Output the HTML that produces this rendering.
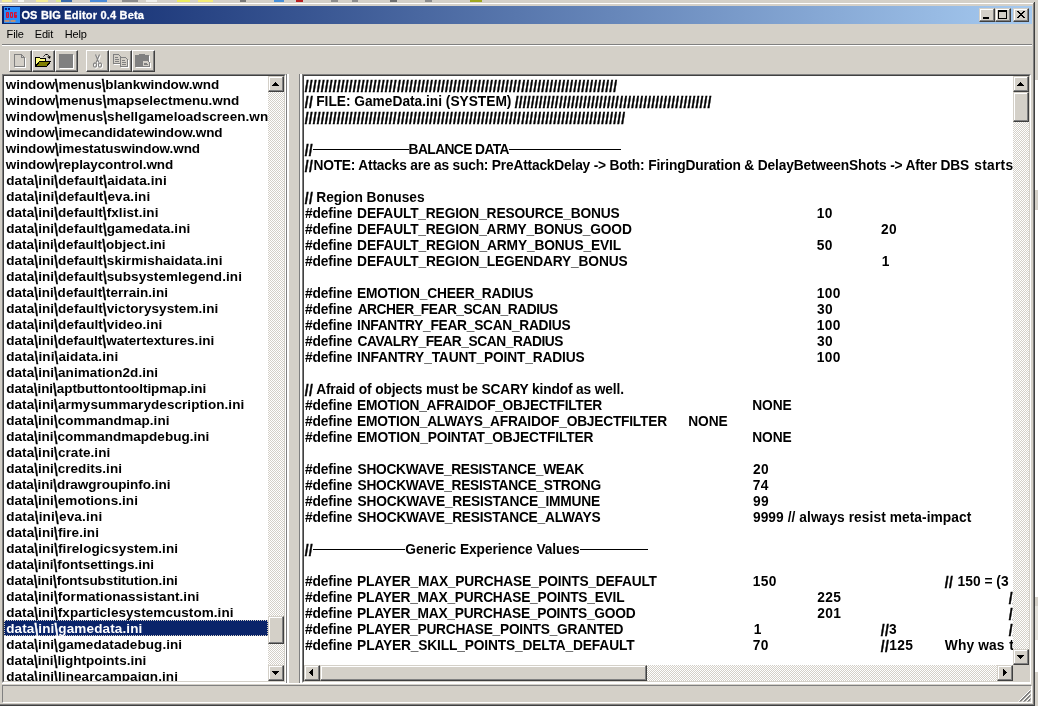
<!DOCTYPE html>
<html><head><meta charset="utf-8"><title>OS BIG Editor 0.4 Beta</title>
<style>
html,body{margin:0;padding:0;}
body{width:1038px;height:706px;overflow:hidden;background:#d4d0c8;position:relative;font-family:"Liberation Sans",sans-serif;}
.a{position:absolute;}
.a,.a *{box-sizing:border-box;}
#title{left:2px;top:6px;width:1030px;height:18px;background:linear-gradient(90deg,#0a246a 0%,#a6caf0 100%);}
#ttext{left:22px;top:6px;height:18px;line-height:18px;color:#fff;font-weight:bold;font-size:11px;white-space:nowrap;-webkit-text-stroke:0.3px #fff;}
.menu{top:27px;height:14px;line-height:14px;font-size:11px;color:#000;white-space:nowrap;}
.btn{background:#d4d0c8;border:1px solid;border-color:#fff #404040 #404040 #fff;box-shadow:inset -1px -1px 0 #808080;}
.sb{background:#d4d0c8;border:1px solid;border-color:#d4d0c8 #404040 #404040 #d4d0c8;box-shadow:inset -1px -1px 0 #808080,inset 1px 1px 0 #fff;}
.tb{top:50px;width:23px;height:22px;}
.cap{top:8px;width:16px;height:14px;}
.sunk{border:1px solid;border-color:#808080 #fff #fff #808080;}
.sunk2{border:1px solid;border-color:#404040 #d4d0c8 #d4d0c8 #404040;}
.track{background:conic-gradient(#fff 25%,#d4d0c8 0 50%,#fff 0 75%,#d4d0c8 0) 0 0/2px 2px;}
.sys{font-family:"Liberation Sans",sans-serif;font-weight:bold;font-size:13.5px;line-height:16px;color:#000;white-space:pre;}
#list{left:4px;top:76px;width:264px;height:605px;overflow:hidden;will-change:transform;}
#list div{position:absolute;left:0;width:264px;height:16px;}
#list div span{position:absolute;top:1px;height:16px;}
#list b{display:inline-block;transform:translateY(-1px) scaleY(1.4);transform-origin:0 3px;-webkit-text-stroke:0.3px currentColor;}
#list div.sel{background:#0a246a;color:#fff;outline:1px dotted #d4d0c8;outline-offset:-1px;}
#memo{left:304px;top:76px;width:709px;height:589px;overflow:hidden;will-change:transform;font-size:13.75px;}
#memo span{position:absolute;height:16px;}
#memo span.sl{transform:scaleY(1.2);transform-origin:0 2px;-webkit-text-stroke:0.35px #000;}
#memo i{position:absolute;height:1px;background:#000;}
.arrow{position:absolute;width:0;height:0;border:solid transparent;}
</style></head><body>
<div class="a" id="w" style="left:0;top:0;width:1038px;height:706px;will-change:transform">

<div class="a" style="left:0;top:2px;width:1035px;height:704px;background:#d4d0c8;border-right:1px solid #404040;border-bottom:1px solid #404040;"></div>
<div class="a" style="left:0;top:3px;width:1033px;height:1px;background:#fff;"></div>
<div class="a" style="left:1033px;top:3px;width:1px;height:702px;background:#808080;"></div>
<div class="a" style="left:0;top:704px;width:1034px;height:1px;background:#808080;"></div>
<div class="a" style="left:1035px;top:80px;width:3px;height:517px;background:#fff"></div>
<div class="a" style="left:1035px;top:190px;width:3px;height:20px;background:#d4d0c8"></div>
<div class="a" style="left:1035px;top:606px;width:3px;height:34px;background:#e4e2dc"></div>
<div class="a" style="left:1035px;top:640px;width:3px;height:32px;background:#fff"></div>
<div class="a" style="left:2px;top:0;width:10px;height:2px;background:#f4ec98"></div>
<div class="a" style="left:18px;top:0;width:6px;height:2px;background:#f4f4f0"></div>
<div class="a" style="left:36px;top:0;width:12px;height:2px;background:#f4ec98"></div>
<div class="a" style="left:56px;top:0;width:5px;height:2px;background:#dce890"></div>
<div class="a" style="left:61px;top:0;width:11px;height:2px;background:#3868a8"></div>
<div class="a" style="left:90px;top:0;width:17px;height:2px;background:#4c8cd8"></div>
<div class="a" style="left:122px;top:0;width:16px;height:2px;background:#8c8c8c"></div>
<div class="a" style="left:146px;top:0;width:11px;height:2px;background:#eeeeea"></div>
<div class="a" style="left:177px;top:0;width:13px;height:2px;background:#ecec60"></div>
<div class="a" style="left:198px;top:0;width:15px;height:2px;background:#f4ec78"></div>
<div class="a" style="left:240px;top:0;width:6px;height:2px;background:#787878"></div>
<div class="a" style="left:274px;top:0;width:10px;height:2px;background:#4890d8"></div>
<div class="a" style="left:296px;top:0;width:7px;height:2px;background:#b82020"></div>
<div class="a" style="left:331px;top:0;width:7px;height:2px;background:#8c8c8c"></div>
<div class="a" style="left:352px;top:0;width:6px;height:2px;background:#8c8c8c"></div>
<div class="a" style="left:390px;top:0;width:7px;height:2px;background:#707070"></div>
<div class="a" style="left:425px;top:0;width:7px;height:2px;background:#8c8c8c"></div>
<div class="a" style="left:470px;top:0;width:12px;height:2px;background:#a0a820"></div>
<div class="a" id="title"></div>
<svg class="a" style="left:4px;top:7px" width="16" height="16" viewBox="4 7 16 16"><rect x="4" y="7" width="16" height="16" fill="#2a8cf8"/><rect x="5" y="8" width="2" height="2" fill="#0a1a80"/><rect x="8" y="8" width="2" height="2" fill="#0a1a80"/><g fill="#d81030"><rect x="6" y="12" width="3" height="6" rx="1"/><rect x="10" y="12" width="3" height="6" rx="1"/><rect x="14" y="12" width="3" height="6" rx="1"/></g><g fill="#2a8cf8"><rect x="7" y="13.5" width="1" height="1"/><rect x="7" y="15.5" width="1" height="1"/><rect x="11" y="13.5" width="1" height="3"/><rect x="15.2" y="13.5" width="1.8" height="1.2"/></g><g fill="#b89078"><rect x="4.5" y="20" width="5" height="2"/><rect x="10.5" y="20" width="5" height="2"/></g></svg>
<div class="a" id="ttext" style="left:21.39px;letter-spacing:0.190px">OS BIG Editor 0.4 Beta</div>
<div class="a sb cap" style="left:979px"><div class="a" style="left:3px;top:8px;width:6px;height:2px;background:#000"></div></div>
<div class="a sb cap" style="left:995px"><div class="a" style="left:2px;top:1px;width:9px;height:9px;border:1px solid #000;border-top-width:2px"></div></div>
<div class="a sb cap" style="left:1013px"><svg class="a" style="left:3px;top:2px" width="8" height="7" viewBox="0 0 8 7" shape-rendering="crispEdges" fill="#000"><rect x="0" y="0" width="2" height="1"/><rect x="6" y="0" width="2" height="1"/><rect x="1" y="1" width="2" height="1"/><rect x="5" y="1" width="2" height="1"/><rect x="2" y="2" width="4" height="1"/><rect x="3" y="3" width="2" height="1"/><rect x="2" y="4" width="4" height="1"/><rect x="1" y="5" width="2" height="1"/><rect x="5" y="5" width="2" height="1"/><rect x="0" y="6" width="2" height="1"/><rect x="6" y="6" width="2" height="1"/></svg></div>
<div class="a menu" style="left:6.61px;letter-spacing:-0.137px">File</div>
<div class="a menu" style="left:34.71px;letter-spacing:-0.146px">Edit</div>
<div class="a menu" style="left:64.71px;letter-spacing:-0.154px">Help</div>
<div class="a" style="left:2px;top:44px;width:1030px;height:1px;background:#808080"></div>
<div class="a" style="left:2px;top:45px;width:1030px;height:1px;background:#fff"></div>
<div class="a btn tb" style="left:9px"></div>
<div class="a btn tb" style="left:32px"></div>
<div class="a btn tb" style="left:55px"></div>
<div class="a btn tb" style="left:86px"></div>
<div class="a btn tb" style="left:109px"></div>
<div class="a btn tb" style="left:132px"></div>
<svg class="a" style="left:9px;top:50px" width="146" height="22" viewBox="9 50 146 22" shape-rendering="crispEdges" fill="none">
<!-- new (disabled) -->
<path d="M15.5 55.5H22.5L25.5 58.5V67.5H15.5Z" stroke="#fff"/>
<path d="M14.5 54.5H21.5L24.5 57.5V66.5H14.5Z" stroke="#808080" fill="#d4d0c8"/>
<path d="M21.5 54.5V57.5H24.5" stroke="#808080"/>
<!-- open -->
<path d="M35.5 66.5V57.5H39.5L40.5 58.5H45.5V61.5H39.5Z" fill="#ffff80" stroke="#000"/>
<path d="M35.5 66.5L39.5 61.5H50.5L46.5 66.5Z" fill="#808000" stroke="#000"/>
<path d="M43.5 56.5L44.5 55.5L45.5 54.5H47.5L48.5 55.5L49.5 56.5V58" stroke="#000" shape-rendering="auto"/>
<path d="M47 56.5H51L49.5 59Z" fill="#000" shape-rendering="auto"/>
<!-- save (disabled) -->
<rect x="60" y="55" width="14" height="14" fill="#fff"/>
<rect x="59" y="54" width="14" height="14" fill="#808080"/>
<!-- cut (disabled) -->
<g shape-rendering="auto" stroke-width="1.1">
<g stroke="#fff" transform="translate(1 1)"><path d="M95.5 54.5L98.8 62.5M99.5 54.5L96.2 62.5"/><ellipse cx="95" cy="65" rx="1.6" ry="2.1"/><ellipse cx="100" cy="65" rx="1.6" ry="2.1"/></g>
<g stroke="#808080"><path d="M95.5 54.5L98.8 62.5M99.5 54.5L96.2 62.5"/><ellipse cx="95" cy="65" rx="1.6" ry="2.1"/><ellipse cx="100" cy="65" rx="1.6" ry="2.1"/></g>
</g>
<!-- copy (disabled) -->
<g stroke="#fff" transform="translate(1 1)"><path d="M113.5 54.5H118.5L120.5 56.5V63.5H113.5Z"/><path d="M120.5 57.5H125.5L127.5 59.5V66.5H120.5Z"/><path d="M115 57.5H118M115 59.5H119M115 61.5H119M122 60.5H125M122 62.5H126M122 64.5H126"/></g>
<g stroke="#808080"><path d="M113.5 54.5H118.5L120.5 56.5V63.5H113.5Z" fill="#d4d0c8"/><path d="M120.5 57.5H125.5L127.5 59.5V66.5H120.5Z" fill="#d4d0c8"/><path d="M115 57.5H118M115 59.5H119M115 61.5H119M122 60.5H125M122 62.5H126M122 64.5H126"/></g>
<!-- paste (disabled) -->
<rect x="136" y="56" width="14" height="12" fill="#fff"/>
<rect x="135" y="55" width="14" height="12" fill="#808080"/>
<rect x="139" y="54" width="6" height="2" fill="#808080"/>
<path d="M143.5 61.5H148.5L150.5 63.5V67.5H143.5Z" fill="#d4d0c8" stroke="#fff"/>
<path d="M142.5 60.5H147.5L149.5 62.5V66.5H142.5Z" fill="#d4d0c8" stroke="#808080"/>
<path d="M144 63.5H147M144 64.5H148" stroke="#808080"/>
</svg>

<div class="a sunk" style="left:2px;top:74px;width:284px;height:609px"><div class="a sunk2" style="left:0;top:0;width:282px;height:607px;background:#fff"></div></div>
<div class="a sys" id="list">
<div style="top:0px"><span style="left:1.82px;letter-spacing:-0.080px">window<b>\</b>menus<b>\</b>blankwindow.wnd</span></div>
<div style="top:16px"><span style="left:1.82px;letter-spacing:0.002px">window<b>\</b>menus<b>\</b>mapselectmenu.wnd</span></div>
<div style="top:32px"><span style="left:1.82px;letter-spacing:0.059px">window<b>\</b>menus<b>\</b>shellgameloadscreen.wnd</span></div>
<div style="top:48px"><span style="left:1.82px;letter-spacing:-0.091px">window<b>\</b>imecandidatewindow.wnd</span></div>
<div style="top:64px"><span style="left:1.82px;letter-spacing:-0.071px">window<b>\</b>imestatuswindow.wnd</span></div>
<div style="top:80px"><span style="left:1.82px;letter-spacing:-0.094px">window<b>\</b>replaycontrol.wnd</span></div>
<div style="top:96px"><span style="left:2.19px;letter-spacing:0.111px">data<b>\</b>ini<b>\</b>default<b>\</b>aidata.ini</span></div>
<div style="top:112px"><span style="left:2.19px;letter-spacing:0.125px">data<b>\</b>ini<b>\</b>default<b>\</b>eva.ini</span></div>
<div style="top:128px"><span style="left:2.19px;letter-spacing:0.084px">data<b>\</b>ini<b>\</b>default<b>\</b>fxlist.ini</span></div>
<div style="top:144px"><span style="left:2.19px;letter-spacing:0.089px">data<b>\</b>ini<b>\</b>default<b>\</b>gamedata.ini</span></div>
<div style="top:160px"><span style="left:2.19px;letter-spacing:0.043px">data<b>\</b>ini<b>\</b>default<b>\</b>object.ini</span></div>
<div style="top:176px"><span style="left:2.19px;letter-spacing:0.093px">data<b>\</b>ini<b>\</b>default<b>\</b>skirmishaidata.ini</span></div>
<div style="top:192px"><span style="left:2.19px;letter-spacing:0.091px">data<b>\</b>ini<b>\</b>default<b>\</b>subsystemlegend.ini</span></div>
<div style="top:208px"><span style="left:2.19px;letter-spacing:0.044px">data<b>\</b>ini<b>\</b>default<b>\</b>terrain.ini</span></div>
<div style="top:224px"><span style="left:2.19px;letter-spacing:0.082px">data<b>\</b>ini<b>\</b>default<b>\</b>victorysystem.ini</span></div>
<div style="top:240px"><span style="left:2.19px;letter-spacing:0.092px">data<b>\</b>ini<b>\</b>default<b>\</b>video.ini</span></div>
<div style="top:256px"><span style="left:2.19px;letter-spacing:0.052px">data<b>\</b>ini<b>\</b>default<b>\</b>watertextures.ini</span></div>
<div style="top:272px"><span style="left:2.19px;letter-spacing:0.139px">data<b>\</b>ini<b>\</b>aidata.ini</span></div>
<div style="top:288px"><span style="left:2.19px;letter-spacing:0.082px">data<b>\</b>ini<b>\</b>animation2d.ini</span></div>
<div style="top:304px"><span style="left:2.19px;letter-spacing:-0.055px">data<b>\</b>ini<b>\</b>aptbuttontooltipmap.ini</span></div>
<div style="top:320px"><span style="left:2.19px;letter-spacing:0.073px">data<b>\</b>ini<b>\</b>armysummarydescription.ini</span></div>
<div style="top:336px"><span style="left:2.19px;letter-spacing:0.053px">data<b>\</b>ini<b>\</b>commandmap.ini</span></div>
<div style="top:352px"><span style="left:2.19px;letter-spacing:0.018px">data<b>\</b>ini<b>\</b>commandmapdebug.ini</span></div>
<div style="top:368px"><span style="left:2.19px;letter-spacing:0.076px">data<b>\</b>ini<b>\</b>crate.ini</span></div>
<div style="top:384px"><span style="left:2.19px;letter-spacing:0.052px">data<b>\</b>ini<b>\</b>credits.ini</span></div>
<div style="top:400px"><span style="left:2.19px;letter-spacing:-0.033px">data<b>\</b>ini<b>\</b>drawgroupinfo.ini</span></div>
<div style="top:416px"><span style="left:2.19px;letter-spacing:0.060px">data<b>\</b>ini<b>\</b>emotions.ini</span></div>
<div style="top:432px"><span style="left:2.19px;letter-spacing:0.192px">data<b>\</b>ini<b>\</b>eva.ini</span></div>
<div style="top:448px"><span style="left:2.19px;letter-spacing:0.075px">data<b>\</b>ini<b>\</b>fire.ini</span></div>
<div style="top:464px"><span style="left:2.19px;letter-spacing:0.081px">data<b>\</b>ini<b>\</b>firelogicsystem.ini</span></div>
<div style="top:480px"><span style="left:2.19px;letter-spacing:-0.000px">data<b>\</b>ini<b>\</b>fontsettings.ini</span></div>
<div style="top:496px"><span style="left:2.19px;letter-spacing:-0.057px">data<b>\</b>ini<b>\</b>fontsubstitution.ini</span></div>
<div style="top:512px"><span style="left:2.19px;letter-spacing:0.057px">data<b>\</b>ini<b>\</b>formationassistant.ini</span></div>
<div style="top:528px"><span style="left:2.19px;letter-spacing:0.064px">data<b>\</b>ini<b>\</b>fxparticlesystemcustom.ini</span></div>
<div class="sel" style="top:544px"><span style="left:2.19px;letter-spacing:0.125px">data<b>\</b>ini<b>\</b>gamedata.ini</span></div>
<div style="top:560px"><span style="left:2.19px;letter-spacing:0.075px">data<b>\</b>ini<b>\</b>gamedatadebug.ini</span></div>
<div style="top:576px"><span style="left:2.19px;letter-spacing:0.022px">data<b>\</b>ini<b>\</b>lightpoints.ini</span></div>
<div style="top:592px"><span style="left:2.19px;letter-spacing:0.084px">data<b>\</b>ini<b>\</b>linearcampaign.ini</span></div>
</div>
<div class="a track" style="left:268px;top:76px;width:16px;height:605px"></div>
<div class="a sb" style="left:268px;top:76px;width:16px;height:16px"><svg class="a" style="left:3px;top:5px" width="7" height="4" viewBox="0 0 7 4" shape-rendering="crispEdges" fill="#000"><rect x="3" y="0" width="1" height="1"/><rect x="2" y="1" width="3" height="1"/><rect x="1" y="2" width="5" height="1"/><rect x="0" y="3" width="7" height="1"/></svg></div>
<div class="a sb" style="left:268px;top:665px;width:16px;height:16px"><svg class="a" style="left:3px;top:5px" width="7" height="4" viewBox="0 0 7 4" shape-rendering="crispEdges" fill="#000"><rect x="0" y="0" width="7" height="1"/><rect x="1" y="1" width="5" height="1"/><rect x="2" y="2" width="3" height="1"/><rect x="3" y="3" width="1" height="1"/></svg></div>
<div class="a sb" style="left:268px;top:616px;width:16px;height:28px"></div>
<div class="a" style="left:286px;top:74px;width:1px;height:610px;background:#808080"></div>
<div class="a" style="left:287px;top:74px;width:2px;height:610px;background:#fff"></div>
<div class="a" style="left:299px;top:74px;width:1px;height:610px;background:#808080"></div>
<div class="a" style="left:300px;top:74px;width:2px;height:610px;background:#fff"></div>
<div class="a" style="left:2px;top:683px;width:1029px;height:1px;background:#fff"></div>
<div class="a sunk" style="left:302px;top:74px;width:729px;height:609px"><div class="a sunk2" style="left:0;top:0;width:727px;height:607px;background:#fff"></div></div>
<div class="a sys" id="memo">
<span class="sl" style="left:0.70px;top:2px;letter-spacing:0.188px">//////////////////////////////////////////////////////////////////////////////</span>
<span class="sl" style="left:0.70px;top:18px;letter-spacing:0.455px">//</span>
<span style="left:12.21px;top:18px;letter-spacing:-0.014px">FILE: GameData.ini (SYSTEM)</span>
<span class="sl" style="left:210.70px;top:18px;letter-spacing:0.197px">/////////////////////////////////////////////////</span>
<span class="sl" style="left:0.70px;top:34px;letter-spacing:0.188px">////////////////////////////////////////////////////////////////////////////////</span>
<span class="sl" style="left:0.70px;top:66px;letter-spacing:0.355px">//</span>
<i style="left:9px;top:73px;width:96px"></i>
<span style="left:104.61px;top:66px;letter-spacing:-0.573px">BALANCE DATA</span>
<i style="left:205px;top:73px;width:112px"></i>
<span class="sl" style="left:0.70px;top:82px;letter-spacing:0.455px">//</span>
<span style="left:9.41px;top:82px;letter-spacing:-0.193px">NOTE: Attacks are as such: PreAttackDelay -&gt; Both:</span>
<span style="left:344.21px;top:82px;letter-spacing:-0.160px">FiringDuration &amp; DelayBetweenShots -&gt; After DBS</span>
<span style="left:670.31px;top:82px;letter-spacing:0.275px">starts</span>
<span class="sl" style="left:0.70px;top:114px;letter-spacing:0.455px">//</span>
<span style="left:12.21px;top:114px;letter-spacing:-0.002px">Region Bonuses</span>
<span style="left:0.90px;top:130px;letter-spacing:-0.099px">#define</span>
<span style="left:53.11px;top:130px;letter-spacing:-0.160px">DEFAULT_REGION_RESOURCE_BONUS</span>
<span style="left:512.65px;top:130px;letter-spacing:0.352px">10</span>
<span style="left:0.90px;top:146px;letter-spacing:-0.099px">#define</span>
<span style="left:53.11px;top:146px;letter-spacing:-0.160px">DEFAULT_REGION_ARMY_BONUS_GOOD</span>
<span style="left:576.99px;top:146px;letter-spacing:0.352px">20</span>
<span style="left:0.90px;top:162px;letter-spacing:-0.099px">#define</span>
<span style="left:53.11px;top:162px;letter-spacing:-0.136px">DEFAULT_REGION_ARMY_BONUS_EVIL</span>
<span style="left:512.84px;top:162px;letter-spacing:0.352px">50</span>
<span style="left:0.90px;top:178px;letter-spacing:-0.099px">#define</span>
<span style="left:53.11px;top:178px;letter-spacing:-0.156px">DEFAULT_REGION_LEGENDARY_BONUS</span>
<span style="left:577.65px;top:178px;letter-spacing:0.352px">1</span>
<span style="left:0.90px;top:210px;letter-spacing:-0.099px">#define</span>
<span style="left:53.11px;top:210px;letter-spacing:-0.208px">EMOTION_CHEER_RADIUS</span>
<span style="left:512.65px;top:210px;letter-spacing:0.352px">100</span>
<span style="left:0.90px;top:226px;letter-spacing:-0.099px">#define</span>
<span style="left:53.64px;top:226px;letter-spacing:-0.471px">ARCHER_FEAR_SCAN_RADIUS</span>
<span style="left:512.93px;top:226px;letter-spacing:0.352px">30</span>
<span style="left:0.90px;top:242px;letter-spacing:-0.099px">#define</span>
<span style="left:53.11px;top:242px;letter-spacing:-0.282px">INFANTRY_FEAR_SCAN_RADIUS</span>
<span style="left:512.65px;top:242px;letter-spacing:0.352px">100</span>
<span style="left:0.90px;top:258px;letter-spacing:-0.099px">#define</span>
<span style="left:53.57px;top:258px;letter-spacing:-0.435px">CAVALRY_FEAR_SCAN_RADIUS</span>
<span style="left:512.93px;top:258px;letter-spacing:0.352px">30</span>
<span style="left:0.90px;top:274px;letter-spacing:-0.099px">#define</span>
<span style="left:53.11px;top:274px;letter-spacing:-0.152px">INFANTRY_TAUNT_POINT_RADIUS</span>
<span style="left:512.65px;top:274px;letter-spacing:0.352px">100</span>
<span class="sl" style="left:0.70px;top:306px;letter-spacing:0.455px">//</span>
<span style="left:12.14px;top:306px;letter-spacing:-0.132px">Afraid of objects must be SCARY kindof as well.</span>
<span style="left:0.90px;top:322px;letter-spacing:-0.099px">#define</span>
<span style="left:53.11px;top:322px;letter-spacing:-0.295px">EMOTION_AFRAIDOF_OBJECTFILTER</span>
<span style="left:448.21px;top:322px;letter-spacing:-0.061px">NONE</span>
<span style="left:0.90px;top:338px;letter-spacing:-0.099px">#define</span>
<span style="left:53.11px;top:338px;letter-spacing:-0.224px">EMOTION_ALWAYS_AFRAIDOF_OBJECTFILTER</span>
<span style="left:384.21px;top:338px;letter-spacing:-0.061px">NONE</span>
<span style="left:0.90px;top:354px;letter-spacing:-0.099px">#define</span>
<span style="left:53.11px;top:354px;letter-spacing:-0.162px">EMOTION_POINTAT_OBJECTFILTER</span>
<span style="left:448.21px;top:354px;letter-spacing:-0.061px">NONE</span>
<span style="left:0.90px;top:386px;letter-spacing:-0.099px">#define</span>
<span style="left:53.54px;top:386px;letter-spacing:-0.306px">SHOCKWAVE_RESISTANCE_WEAK</span>
<span style="left:448.99px;top:386px;letter-spacing:0.352px">20</span>
<span style="left:0.90px;top:402px;letter-spacing:-0.099px">#define</span>
<span style="left:53.54px;top:402px;letter-spacing:-0.277px">SHOCKWAVE_RESISTANCE_STRONG</span>
<span style="left:448.87px;top:402px;letter-spacing:0.352px">74</span>
<span style="left:0.90px;top:418px;letter-spacing:-0.099px">#define</span>
<span style="left:53.54px;top:418px;letter-spacing:-0.197px">SHOCKWAVE_RESISTANCE_IMMUNE</span>
<span style="left:448.93px;top:418px;letter-spacing:0.352px">99</span>
<span style="left:0.90px;top:434px;letter-spacing:-0.099px">#define</span>
<span style="left:53.54px;top:434px;letter-spacing:-0.218px">SHOCKWAVE_RESISTANCE_ALWAYS</span>
<span style="left:448.93px;top:434px;letter-spacing:0.066px">9999 // always resist meta-impact</span>
<span class="sl" style="left:0.70px;top:466px;letter-spacing:0.355px">//</span>
<i style="left:9px;top:473px;width:92px"></i>
<span style="left:101.37px;top:466px;letter-spacing:-0.061px">Generic Experience Values</span>
<i style="left:276px;top:473px;width:68px"></i>
<span style="left:0.90px;top:498px;letter-spacing:-0.099px">#define</span>
<span style="left:53.11px;top:498px;letter-spacing:-0.196px">PLAYER_MAX_PURCHASE_POINTS_DEFAULT</span>
<span style="left:448.65px;top:498px;letter-spacing:0.352px">150</span>
<span class="sl" style="left:640.70px;top:498px;letter-spacing:0.455px">//</span>
<span style="left:653.55px;top:498px;letter-spacing:0.029px">150 = (3</span>
<span style="left:0.90px;top:514px;letter-spacing:-0.099px">#define</span>
<span style="left:53.11px;top:514px;letter-spacing:-0.238px">PLAYER_MAX_PURCHASE_POINTS_EVIL</span>
<span style="left:513.19px;top:514px;letter-spacing:0.352px">225</span>
<span class="sl" style="left:704.70px;top:514px;letter-spacing:0.355px">//</span>
<span style="left:0.90px;top:530px;letter-spacing:-0.099px">#define</span>
<span style="left:53.11px;top:530px;letter-spacing:-0.251px">PLAYER_MAX_PURCHASE_POINTS_GOOD</span>
<span style="left:513.19px;top:530px;letter-spacing:0.352px">201</span>
<span class="sl" style="left:704.70px;top:530px;letter-spacing:0.355px">//</span>
<span style="left:0.90px;top:546px;letter-spacing:-0.099px">#define</span>
<span style="left:53.11px;top:546px;letter-spacing:-0.254px">PLAYER_PURCHASE_POINTS_GRANTED</span>
<span style="left:449.65px;top:546px;letter-spacing:0.352px">1</span>
<span class="sl" style="left:576.70px;top:546px;letter-spacing:0.455px">//</span>
<span style="left:585.03px;top:546px;letter-spacing:0.352px">3</span>
<span class="sl" style="left:704.70px;top:546px;letter-spacing:0.355px">//</span>
<span style="left:0.90px;top:562px;letter-spacing:-0.099px">#define</span>
<span style="left:53.11px;top:562px;letter-spacing:-0.148px">PLAYER_SKILL_POINTS_DELTA_DEFAULT</span>
<span style="left:448.87px;top:562px;letter-spacing:0.352px">70</span>
<span class="sl" style="left:576.70px;top:562px;letter-spacing:0.455px">//</span>
<span style="left:585.25px;top:562px;letter-spacing:0.352px">125</span>
<span style="left:640.78px;top:562px;letter-spacing:0.138px">Why was</span>
<span style="left:705.15px;top:562px;letter-spacing:0.000px">t</span>
</div>
<div class="a track" style="left:1013px;top:76px;width:16px;height:589px"></div>
<div class="a sb" style="left:1013px;top:76px;width:16px;height:16px"><svg class="a" style="left:3px;top:5px" width="7" height="4" viewBox="0 0 7 4" shape-rendering="crispEdges" fill="#000"><rect x="3" y="0" width="1" height="1"/><rect x="2" y="1" width="3" height="1"/><rect x="1" y="2" width="5" height="1"/><rect x="0" y="3" width="7" height="1"/></svg></div>
<div class="a sb" style="left:1013px;top:649px;width:16px;height:16px"><svg class="a" style="left:3px;top:5px" width="7" height="4" viewBox="0 0 7 4" shape-rendering="crispEdges" fill="#000"><rect x="0" y="0" width="7" height="1"/><rect x="1" y="1" width="5" height="1"/><rect x="2" y="2" width="3" height="1"/><rect x="3" y="3" width="1" height="1"/></svg></div>
<div class="a sb" style="left:1013px;top:92px;width:16px;height:30px"></div>
<div class="a track" style="left:304px;top:665px;width:709px;height:16px"></div>
<div class="a sb" style="left:304px;top:665px;width:16px;height:16px"><svg class="a" style="left:4px;top:3px" width="4" height="7" viewBox="0 0 4 7" shape-rendering="crispEdges" fill="#000"><rect x="0" y="3" width="1" height="1"/><rect x="1" y="2" width="1" height="3"/><rect x="2" y="1" width="1" height="5"/><rect x="3" y="0" width="1" height="7"/></svg></div>
<div class="a sb" style="left:997px;top:665px;width:16px;height:16px"><svg class="a" style="left:5px;top:3px" width="4" height="7" viewBox="0 0 4 7" shape-rendering="crispEdges" fill="#000"><rect x="0" y="0" width="1" height="7"/><rect x="1" y="1" width="1" height="5"/><rect x="2" y="2" width="1" height="3"/><rect x="3" y="3" width="1" height="1"/></svg></div>
<div class="a sb" style="left:320px;top:665px;width:327px;height:16px"></div>
<div class="a" style="left:1013px;top:665px;width:16px;height:16px;background:#d4d0c8"></div>
<div class="a" style="left:2px;top:685px;width:1030px;height:18px;border:1px solid;border-color:#808080 #fff #fff #808080"></div>
<svg class="a" style="left:1018px;top:689px" width="13" height="13" viewBox="0 0 13 13"><g stroke-width="1"><path d="M12.5 .5L.5 12.5M12.5 4.5l-8 8M12.5 8.5l-4 4" stroke="#fff"/><path d="M12.5 1.5l-11 11M12.5 2.5l-10 10M12.5 5.5l-7 7M12.5 6.5l-6 6M12.5 9.5l-3 3M12.5 10.5l-2 2" stroke="#808080"/></g></svg>
</div></body></html>
